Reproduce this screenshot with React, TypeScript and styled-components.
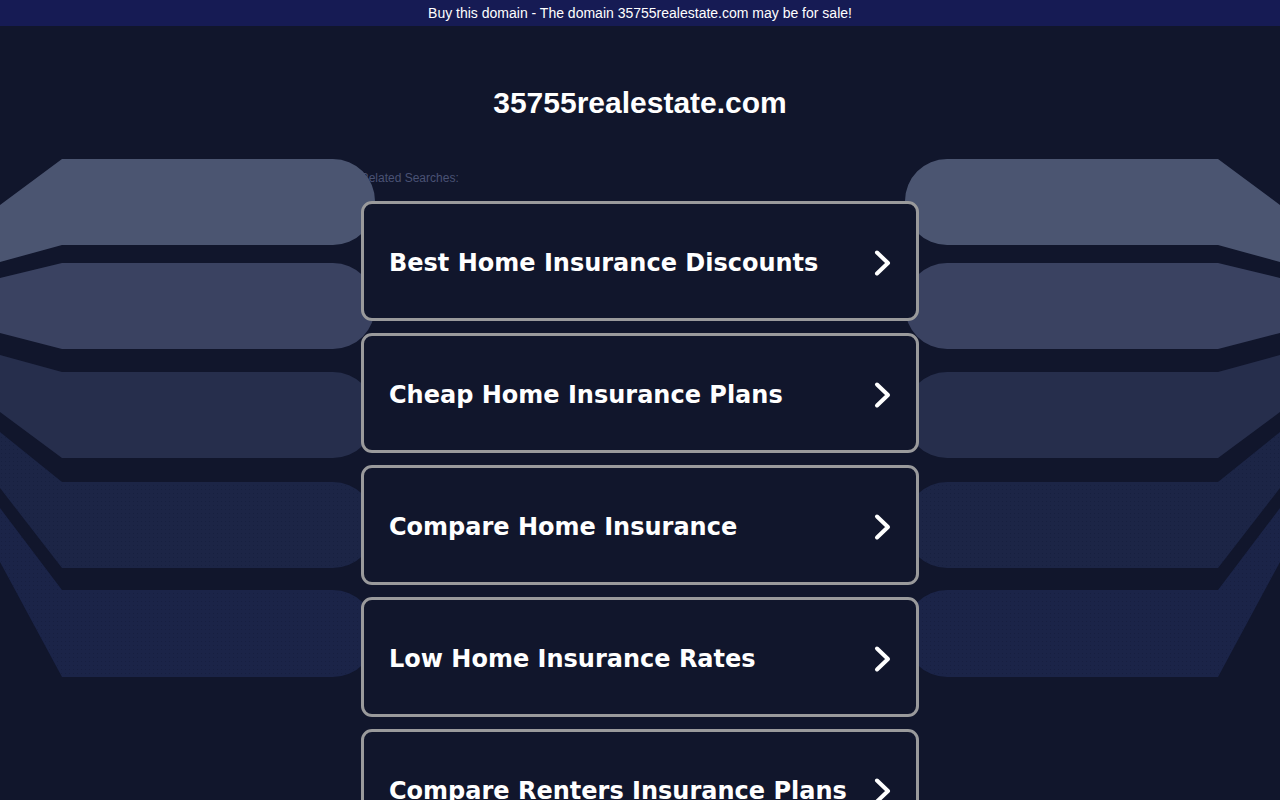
import React from "react";
import styled, { createGlobalStyle } from "styled-components";

const GlobalStyle = createGlobalStyle`
  html, body {
    margin: 0;
    padding: 0;
    background: #11162c;
    overflow: hidden;
  }
  body {
    font-family: "Liberation Sans", Arial, sans-serif;
  }
`;

const Page = styled.div`
  position: relative;
  width: 1280px;
  height: 800px;
  overflow: hidden;
  background: #11162c;
`;

const TopBar = styled.div`
  height: 26px;
  background: #161b54;
  color: #ffffff;
  font-family: "Liberation Sans", Arial, sans-serif;
  font-size: 14px;
  display: flex;
  align-items: center;
  justify-content: center;
`;

const Title = styled.h1`
  margin: 57px 0 0;
  text-align: center;
  color: #ffffff;
  font-family: "Liberation Sans", Arial, sans-serif;
  font-weight: 700;
  font-size: 30px;
  line-height: 40px;
`;

const Content = styled.div`
  width: 558px;
  margin: 48px auto 0;
  display: flex;
  flex-direction: column;
`;

const Label = styled.div`
  color: #4a5274;
  font-family: "Liberation Sans", Arial, sans-serif;
  font-size: 12px;
  line-height: 14px;
  margin-left: -1px;
  margin-bottom: 16px;
`;

const List = styled.div`
  position: relative;
  z-index: 2;
  display: flex;
  flex-direction: column;
  gap: 12px;
`;

const Card = styled.a`
  box-sizing: border-box;
  height: 120px;
  border: 3px solid #9a9a9c;
  border-radius: 11px;
  background: #11162c;
  display: flex;
  align-items: center;
  justify-content: space-between;
  padding: 3px 23px 0 25px;
  text-decoration: none;
  cursor: pointer;
`;

const CardText = styled.span`
  color: #ffffff;
  font-family: "DejaVu Sans", Verdana, sans-serif;
  font-weight: 700;
  font-size: 24px;
  line-height: 28px;
`;

const Decor = styled.svg`
  position: absolute;
  left: 0;
  top: 0;
  z-index: 1;
  pointer-events: none;
`;

type Band = {
  tl: number;
  top: number;
  bottom: number;
  bl: number;
  fill: string;
  dotted?: boolean;
};

const bands: Band[] = [
  { tl: 205, top: 159, bottom: 245, bl: 262, fill: "#4b5571" },
  { tl: 278, top: 263, bottom: 349, bl: 333, fill: "#3a4261" },
  { tl: 355, top: 372, bottom: 458, bl: 412, fill: "#262e4c" },
  { tl: 432, top: 482, bottom: 568, bl: 488, fill: "#1c2546", dotted: true },
  { tl: 508, top: 590, bottom: 677, bl: 562, fill: "#1b2448", dotted: true },
];

const bandPath = (b: Band) => {
  const r = 42;
  const x = 375;
  return `M0 ${b.tl} L62 ${b.top} L${x - r} ${b.top} A${r} ${r} 0 0 1 ${x} ${b.top + r} L${x} ${b.bottom - r} A${r} ${r} 0 0 1 ${x - r} ${b.bottom} L62 ${b.bottom} L0 ${b.bl} Z`;
};

const BandSet: React.FC = () => (
  <>
    {bands.map((b, i) => (
      <g key={i}>
        <path d={bandPath(b)} fill={b.fill} />
        {b.dotted && <path d={bandPath(b)} fill="url(#dots)" />}
      </g>
    ))}
  </>
);

const Chevron: React.FC = () => (
  <svg width="20" height="28" viewBox="0 0 20 28">
    <path
      d="M4 3.5 L15 14 L4 24.5"
      fill="none"
      stroke="#ffffff"
      strokeWidth="4"
      strokeLinecap="round"
      strokeLinejoin="round"
    />
  </svg>
);

const items = [
  "Best Home Insurance Discounts",
  "Cheap Home Insurance Plans",
  "Compare Home Insurance",
  "Low Home Insurance Rates",
  "Compare Renters Insurance Plans",
];

export default function App() {
  return (
    <Page>
      <GlobalStyle />
      <Decor width="1280" height="800" viewBox="0 0 1280 800">
        <defs>
          <pattern id="dots" width="4" height="4" patternUnits="userSpaceOnUse">
            <rect x="1" y="1" width="1" height="1" fill="#141c3a" opacity="0.6" />
          </pattern>
        </defs>
        <BandSet />
        <g transform="translate(1280 0) scale(-1 1)">
          <BandSet />
        </g>
      </Decor>
      <TopBar>Buy this domain - The domain 35755realestate.com may be for sale!</TopBar>
      <Title>35755realestate.com</Title>
      <Content>
        <Label>Related Searches:</Label>
        <List>
          {items.map((t) => (
            <Card key={t}>
              <CardText>{t}</CardText>
              <Chevron />
            </Card>
          ))}
        </List>
      </Content>
    </Page>
  );
}
